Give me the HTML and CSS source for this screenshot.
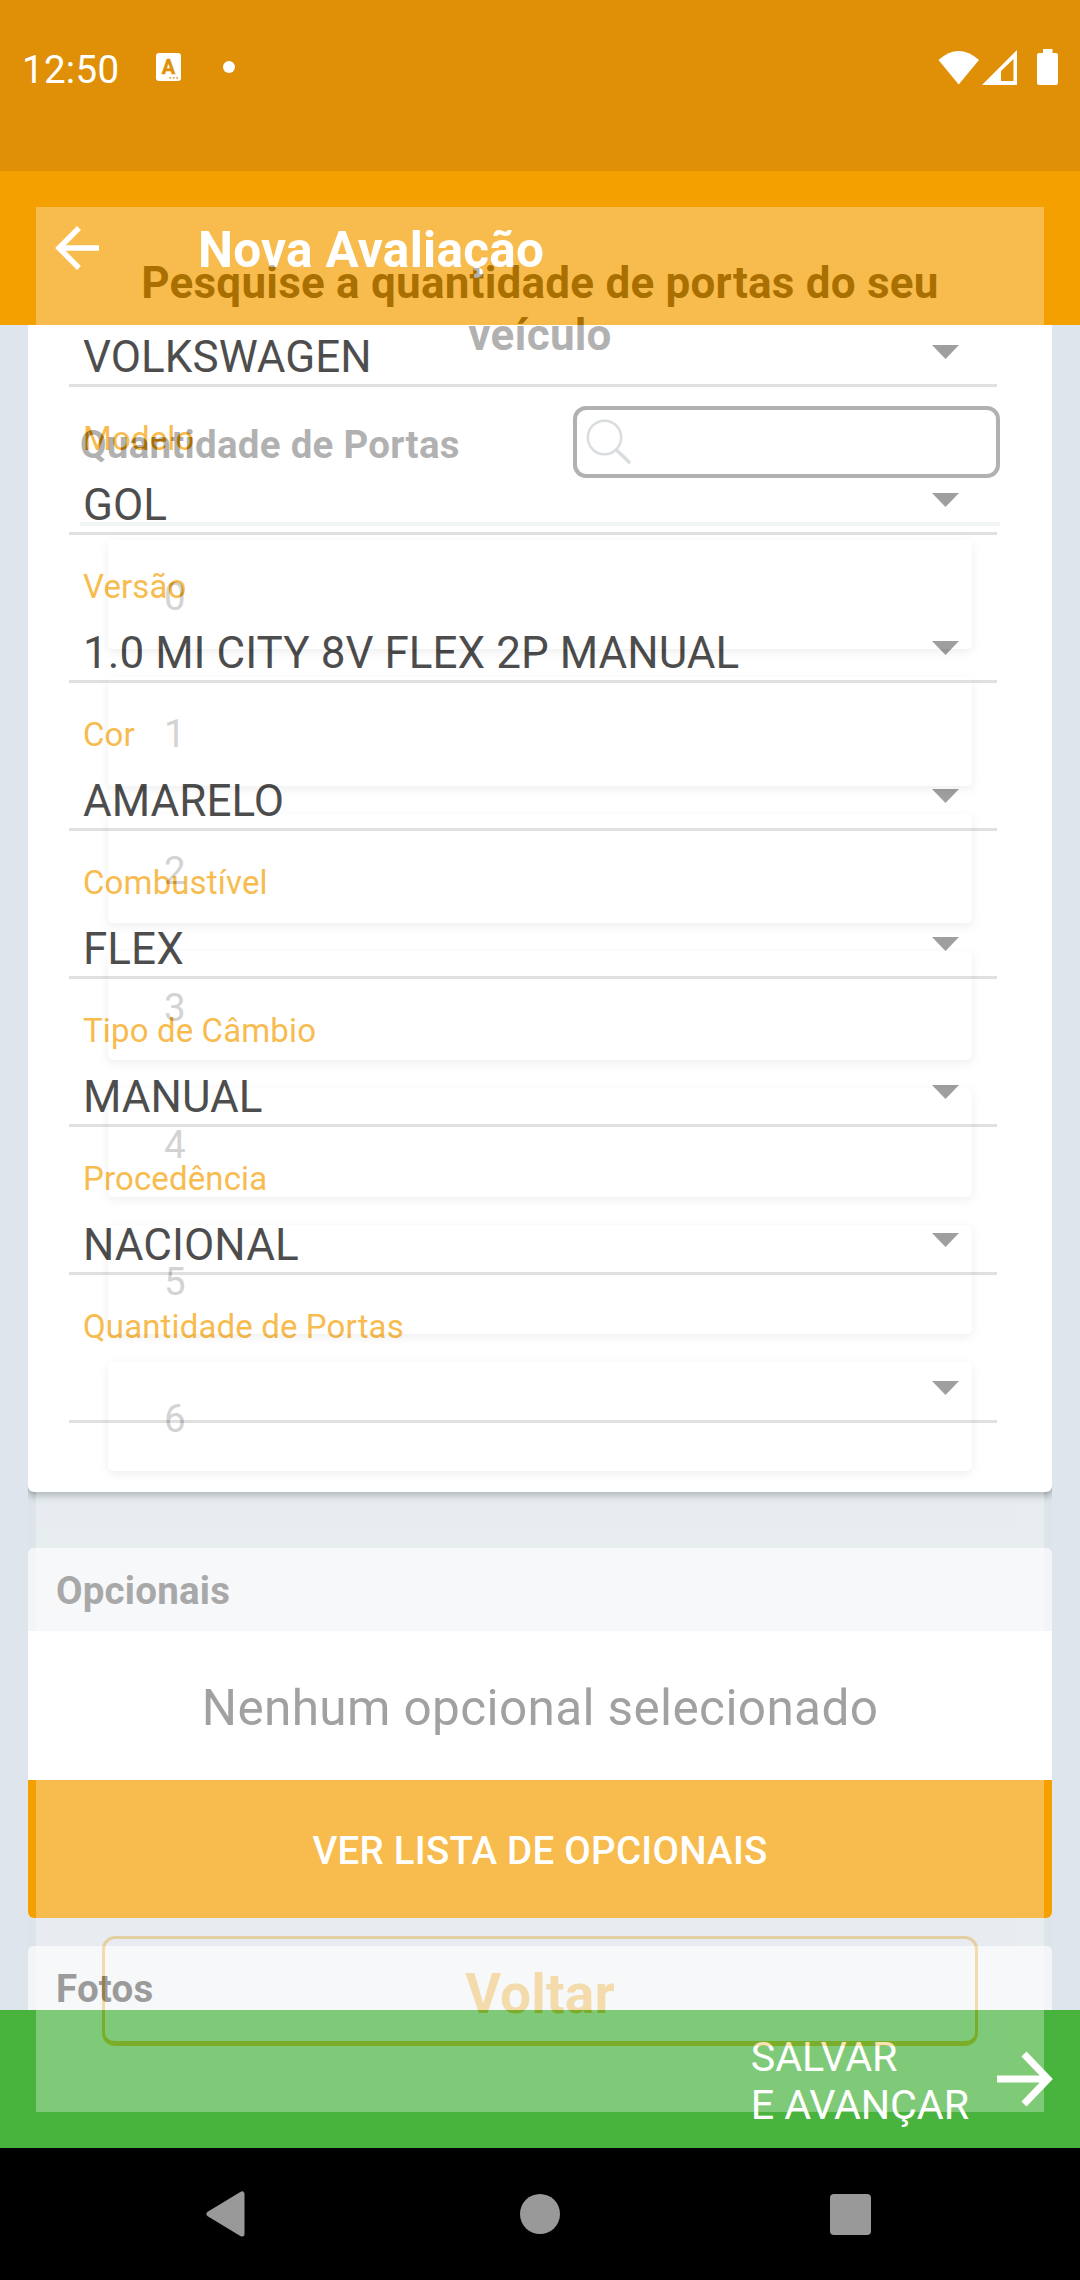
FILE: index.html
```html
<!DOCTYPE html>
<html lang="pt-BR">
<head>
<meta charset="utf-8">
<title>Nova Avaliação</title>
<link rel="stylesheet" href="styles.css">
</head>
<body>
<div class="screen">
  <header class="status">
    <span class="clock">12:50</span>
    <span class="notice"><b>A</b><i>•••</i></span>
    <span class="more"></span>
    <svg class="signals" width="122" height="40" viewBox="937 47 122 40">
      <path fill="#fff" d="M938.5 60Q958.700 42 979 60L958.700 84.500Z"/>
      <path fill="#fff" fill-rule="evenodd" d="M982 85L1017 50V85ZM1001 71V81H1013.500V59Z"/>
      <path fill="#fff" d="M1043 49h9.500v4h3.500q2 0 2 2v28q0 2-2 2h-17q-2 0-2-2v-28q0-2 2-2h4z"/>
    </svg>
  </header>
  <header class="appbar">
    <svg width="44" height="44" viewBox="0 0 44 44"><path d="M24 2L4 22L24 42M3 22H44" fill="none" stroke="#fff" stroke-width="5.500"/></svg>
    <h1>Nova Avaliação</h1>
  </header>
  <main class="page">
    <div class="column">
      <section class="card form">
        <div class="field first"><div class="value">VOLKSWAGEN</div></div>
        <div class="field"><div class="label">Modelo</div><div class="value">GOL</div></div>
        <div class="field"><div class="label">Versão</div><div class="value">1.0 MI CITY 8V FLEX 2P MANUAL</div></div>
        <div class="field"><div class="label">Cor</div><div class="value">AMARELO</div></div>
        <div class="field"><div class="label">Combustível</div><div class="value">FLEX</div></div>
        <div class="field"><div class="label">Tipo de Câmbio</div><div class="value">MANUAL</div></div>
        <div class="field"><div class="label">Procedência</div><div class="value">NACIONAL</div></div>
        <div class="field"><div class="label">Quantidade de Portas</div><div class="value"></div></div>
      </section>
      <section class="card options">
        <h2>Opcionais</h2>
        <p>Nenhum opcional selecionado</p>
        <button class="list-button">VER LISTA DE OPCIONAIS</button>
      </section>
      <section class="card photos"><h2>Fotos</h2></section>
    </div>
  </main>
  <footer class="save">
    <span>SALVAR<br>E AVANÇAR</span>
    <svg width="56" height="56" viewBox="0 0 56 56"><path d="M27 3L51 28L27 53M0 28H51" fill="none" stroke="#fff" stroke-width="7"/></svg>
  </footer>
  <nav class="keys">
    <svg width="40" height="46" viewBox="0 0 40 46"><path d="M3 23L36 3V43Z" fill="#999" stroke="#999" stroke-width="5" stroke-linejoin="round"/></svg>
    <span class="home"></span>
    <span class="recent"></span>
  </nav>

  <div class="dialog">
    <h3>Pesquise a quantidade de portas do seu veículo</h3>
    <div class="search-row">
      <span>Quantidade de Portas</span>
      <div class="search">
        <svg width="46" height="46" viewBox="0 0 46 46" fill="none" stroke="#82909a"><circle cx="18.500" cy="18.500" r="16.700" stroke-width="2.500"/><path d="M31 31.500L43 43" stroke-width="3.500" stroke-linecap="round"/></svg>
      </div>
    </div>
    <div class="rule"></div>
    <div class="choices">
      <div>0</div><div>1</div><div>2</div><div>3</div><div>4</div><div>5</div><div>6</div>
    </div>
    <button class="back">Voltar</button>
  </div>
</div>
</body>
</html>
```
FILE: styles.css
```css
* { box-sizing: border-box; }
body { margin: 0; font-family: Roboto, sans-serif; }
h1, h2, h3, p { margin: 0; }
button { font-family: inherit; margin: 0; padding: 0; }
.screen { position: relative; width: 1080px; height: 2280px; overflow: hidden; display: flex; flex-direction: column; }

.status { height: 171px; background: #df9007; display: flex; align-items: flex-start; padding: 47px 21px 0 22px; color: #fff; }
.clock { font-size: 38.5px; letter-spacing: .3px; line-height: 45px; width: 134px; }
.notice { width: 25px; height: 28px; margin-top: 6px; background: #fff; border-radius: 3px; color: #df9007; display: flex; flex-direction: column; align-items: center; }
.notice b { font-size: 20px; line-height: 24px; height: 23px; padding-top: 2px; font-weight: 700; -webkit-text-stroke: .5px #df9007; }
.notice i { align-self: flex-end; font: 6px/3px "DejaVu Sans", sans-serif; padding-right: 2px; }
.more { width: 12px; height: 12px; margin: 14px 0 0 42px; border-radius: 50%; background: #fff; }
.signals { margin-left: auto; }

.appbar { height: 154px; background: #f4a000; display: flex; align-items: center; padding-left: 55px; gap: 99px; color: #fff; }
.appbar h1 { font-size: 49.5px; letter-spacing: .3px; line-height: 58px; font-weight: 700; padding-top: 4px; }

.page { height: 1685px; background: #dee5ed; padding: 0 28px; overflow: hidden; }
.column { height: 1685px; background: #dee5ea; overflow: hidden; display: flex; flex-direction: column; }
.card { background: #fff; border-radius: 6px; overflow: hidden; flex: none; }
.form { height: 1167px; padding: 0 55px 0 41px; border-radius: 0 0 6px 6px; box-shadow: 0 3px 8px rgba(0, 20, 20, .42); }
.field { height: 148px; border-bottom: 3px solid #d3d3d3; padding: 32px 0 0 14px; }
.field.first { height: 62px; padding-top: 6px; }
.label { font-size: 33px; letter-spacing: .13px; line-height: 40px; margin-bottom: 20px; color: #f4a000; }
.value { font-size: 44px; letter-spacing: .04px; line-height: 52px; height: 52px; color: #000; display: flex; padding-right: 38px; white-space: nowrap; }
.value::after { content: ""; width: 27px; height: 14px; margin: 14px 0 0 auto; background: #757575; clip-path: polygon(0 0, 100% 0, 50% 100%); }
.card h2 { height: 83px; padding-left: 28px; background: #f3f5f8; font-size: 38.5px; letter-spacing: .2px; line-height: 85px; font-weight: 700; color: #838383; }
.options { margin-top: 56px; height: 370px; }
.options p { height: 149px; line-height: 154px; text-align: center; font-size: 49.5px; letter-spacing: .37px; color: #797979; }
.list-button { display: block; width: 100%; height: 138px; border: 0; background: #f4a000; color: #fff; font-size: 38.5px; letter-spacing: .25px; font-weight: 500; line-height: 141px; }
.photos { margin-top: 28px; height: 140px; }
.photos h2 { color: #707070; }

.save { height: 138px; background: #48b33d; color: #fff; display: flex; align-items: center; justify-content: flex-end; gap: 28px; padding-right: 27px; font-size: 41.25px; letter-spacing: -.1px; line-height: 48px; }
.save span { padding-top: 3px; }
.keys { height: 132px; background: #000; display: flex; align-items: center; padding-left: 206px; }
.home { width: 40px; height: 40px; border-radius: 50%; background: #999; margin-left: 274px; }
.recent { width: 41px; height: 41px; border-radius: 4px; background: #999; margin-left: 270px; }

.dialog { position: absolute; left: 36px; top: 207px; width: 1008px; height: 1905px; opacity: .3; background: #fff; color: #000; padding: 50px 44px 0; display: flex; flex-direction: column; }
.dialog h3 { font-size: 44px; letter-spacing: .22px; line-height: 52px; font-weight: 700; text-align: center; padding: 0 40px; }
.search-row { display: flex; justify-content: space-between; align-items: center; margin-top: 45px; height: 72px; font-size: 38.5px; letter-spacing: .26px; font-weight: 700; }
.search-row span { padding-top: 4px; }
.search { width: 427px; height: 72px; border: 4px solid #000; border-radius: 13px; padding: 9px; }
.search svg { display: block; }
.rule { height: 4px; background: #d4e1e1; margin-top: 44px; flex: none; }
.choices { display: flex; flex-direction: column; gap: 27px; margin-top: 14px; padding: 0 28px; }
.choices div { height: 109px; margin-bottom: 1px; border-radius: 5px; background: #fff; box-shadow: 0 3px 9px rgba(0, 0, 0, .2); padding-left: 56px; font-size: 38.5px; line-height: 113px; color: #707070; }
.back { width: 876px; height: 110px; margin: 464px auto 0; background: #fff; border: 3px solid #f4a000; border-bottom-width: 5px; border-radius: 13px; color: #f4a000; font-size: 55px; letter-spacing: .2px; font-weight: 700; line-height: 64px; padding-top: 7px; }
```
